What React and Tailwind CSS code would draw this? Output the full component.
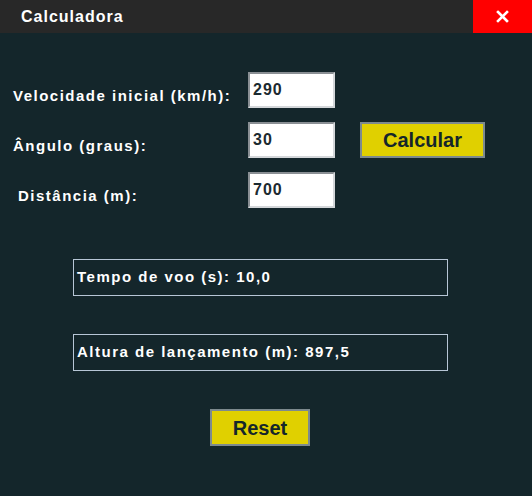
import { useState, useEffect, useRef } from 'react';

const App = () => {
  const [velocidade, setVelocidade] = useState('290');
  const [angulo, setAngulo] = useState('30');
  const [distancia, setDistancia] = useState('700');
  const distRef = useRef(null);

  // Foco no último campo, cursor no fim
  useEffect(() => {
    const el = distRef.current;
    if (el) {
      el.focus();
      el.setSelectionRange(el.value.length, el.value.length);
    }
  }, []);

  const inputClass =
    'w-[87px] h-[36px] bg-white px-[3px] text-[16px] font-bold tracking-[1px] text-[#1b2a30] caret-black outline-none border-2 border-t-[#8a8f94] border-l-[#8a8f94] border-b-[#d4d7da] border-r-[#d4d7da]';

  return (
    <div
      className="w-[532px] h-[496px] flex flex-col bg-[#14262b] text-white overflow-hidden"
      style={{ fontFamily: '"Liberation Sans", Arial, sans-serif' }}
    >
      {/* Barra de título */}
      <div className="h-[33px] flex items-center bg-[#282828] shrink-0">
        <span className="pl-[21px] text-[16px] font-bold tracking-[1px] flex-1">Calculadora</span>
        <div className="w-[59px] h-full bg-[#ff0000] flex items-center justify-center">
          <svg width="13" height="13" viewBox="0 0 13 13">
            <path d="M2 2 L11 11 M11 2 L2 11" stroke="white" strokeWidth="2.6" strokeLinecap="square" />
          </svg>
        </div>
      </div>

      {/* Entradas */}
      <div className="flex flex-col gap-[14px] pt-[39px]">
        <div className="flex items-center h-[36px]">
          <label className="w-[248px] pl-[13px] pt-[12px] text-[15px] font-bold tracking-[1.5px]">Velocidade inicial (km/h):</label>
          <input className={inputClass} value={velocidade} onChange={(e) => setVelocidade(e.target.value)} />
        </div>
        <div className="flex items-center h-[36px]">
          <label className="w-[248px] pl-[13px] pt-[12px] text-[15px] font-bold tracking-[1.5px]">Ângulo (graus):</label>
          <input className={inputClass} value={angulo} onChange={(e) => setAngulo(e.target.value)} />
          <button className="ml-[25px] w-[125px] h-[36px] bg-[#e0d000] border-2 border-[#7d8a8e] text-[#14262b] text-[20px] font-bold">
            Calcular
          </button>
        </div>
        <div className="flex items-center h-[36px]">
          <label className="w-[248px] pl-[18px] pt-[12px] text-[15px] font-bold tracking-[1.5px]">Distância (m):</label>
          <input ref={distRef} className={inputClass} value={distancia} onChange={(e) => setDistancia(e.target.value)} />
        </div>
      </div>

      {/* Resultados */}
      <div className="flex flex-col gap-[38px] pt-[51px] pl-[73px]">
        <div className="w-[375px] h-[37px] border border-[#b7c6d6] flex items-center pl-[3px] text-[15px] font-bold tracking-[1.5px]">
          Tempo de voo (s): 10,0
        </div>
        <div className="w-[375px] h-[37px] border border-[#b7c6d6] flex items-center pl-[3px] text-[15px] font-bold tracking-[1.5px]">
          Altura de lançamento (m): 897,5
        </div>
      </div>

      <div className="flex pt-[38px] pl-[210px]">
        <button className="w-[100px] h-[37px] bg-[#e0d000] border-2 border-[#7d8a8e] text-[#14262b] text-[20px] font-bold">
          Reset
        </button>
      </div>
    </div>
  );
};

export default App;
